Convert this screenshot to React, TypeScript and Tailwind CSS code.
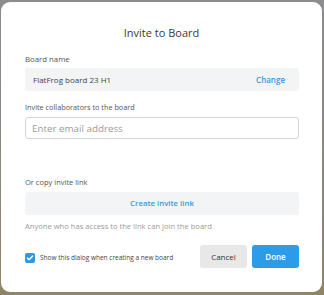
import { Check } from "lucide-react";

export default function App() {
  return (
    <div className="h-[295px] w-[324px] bg-gradient-to-b from-[#8d8d90] via-[#8a8880] to-[#8f8466] pt-[2px] pl-[1px] font-['Open_Sans',sans-serif]">
      <div className="flex h-[290px] w-[321px] flex-col rounded-[9px] bg-white px-[24px]">
        {/* Title */}
        <h1 className="mt-[22px] text-center text-[11px] leading-[18px] text-[#3a3a3a]">
          Invite to Board
        </h1>

        {/* Board name */}
        <label className="mt-[11px] text-[7.8px] leading-[12px] text-[#555]">Board name</label>
        <div className="mt-[3px] flex h-[23px] w-[274px] items-center justify-between rounded-[3px] bg-[#f3f4f6] pl-[8px] pr-[14px]">
          <span className="text-[8px] text-[#444]">FlatFrog board 23 H1</span>
          <span className="text-[8px] font-semibold text-[#3a98d8]">Change</span>
        </div>

        {/* Invite collaborators */}
        <label className="mt-[10px] text-[7.3px] leading-[12px] text-[#555]">
          Invite collaborators to the board
        </label>
        <input
          className="mt-[4px] h-[22px] w-[274px] rounded-[3px] border border-[#d4d4d4] px-[6px] text-[9.8px] text-[#444] outline-none placeholder:text-[#9a9a9a]"
          placeholder="Enter email address"
        />

        {/* Invite link */}
        <label className="mt-[37px] text-[7.5px] leading-[12px] text-[#555]">Or copy invite link</label>
        <div className="mt-[4px] flex h-[23px] w-[274px] items-center justify-center rounded-[3px] bg-[#f3f4f6]">
          <span className="text-[7.8px] font-semibold text-[#3a98d8]">Create invite link</span>
        </div>
        <p className="mt-[5px] text-[7.6px] leading-[12px] text-[#9a9a9a]">
          Anyone who has access to the link can join the board
        </p>

        {/* Footer */}
        <div className="mt-[13px] flex w-[274px] items-center">
          <div className="flex flex-1 items-center gap-[5px] pt-[2px]">
            <span className="flex h-[10px] w-[10px] items-center justify-center rounded-[2px] bg-[#2d98e4]">
              <Check className="h-[8px] w-[8px] text-white" strokeWidth={4} />
            </span>
            <span className="text-[6.5px] text-[#444]">Show this dialog when creating a new board</span>
          </div>
          <button className="h-[23px] w-[47px] rounded-[3px] bg-[#e8e8e8] text-[8px] text-[#333]">
            Cancel
          </button>
          <button className="ml-[5px] h-[23px] w-[47px] rounded-[3px] bg-[#2d9be8] text-[8px] font-semibold text-white">
            Done
          </button>
        </div>
      </div>
    </div>
  );
}
